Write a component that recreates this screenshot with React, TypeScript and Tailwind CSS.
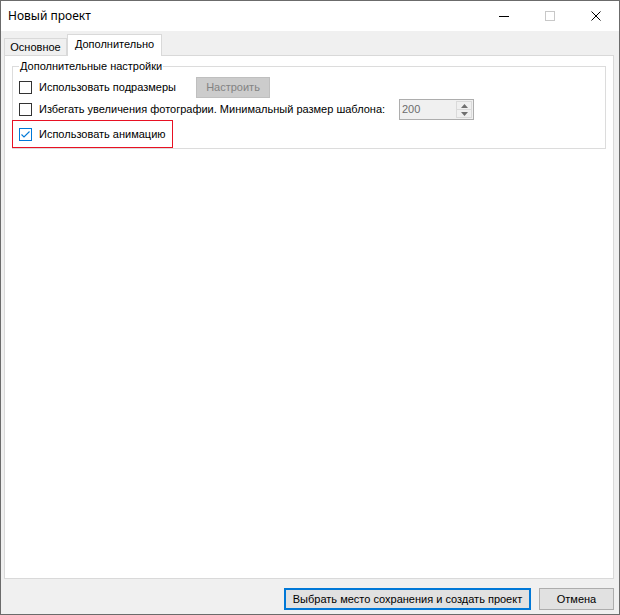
import React from "react";

const ui = "font-['Liberation_Sans',Arial,sans-serif] text-[11px] leading-[13px] text-black";

function CheckBox({ checked = false }: { checked?: boolean }) {
  return (
    <span
      className={`flex h-[13px] w-[13px] shrink-0 items-center justify-center border bg-white ${
        checked ? "border-[#0078d7]" : "border-[#333333]"
      }`}
    >
      {checked && (
        <svg width="11" height="11" viewBox="0 0 11 11" aria-hidden="true">
          <path d="M1.5 5.5 L4 8 L9.5 2.5" fill="none" stroke="#0078d7" strokeWidth="1.1" />
        </svg>
      )}
    </span>
  );
}

function SpinBox({ value }: { value: string }) {
  return (
    <div className="flex h-[21px] w-[75px] items-stretch border border-[#adadad] bg-[#f0f0f0]">
      <span className="flex-1 pl-[2px] pt-[3px] text-[#6d6d6d]">{value}</span>
      <div className="my-[1px] mr-[1px] flex w-[16px] flex-col">
        <span className="flex flex-1 items-center justify-center border border-[#dadada] bg-[#f0f0f0]">
          <svg width="7" height="4" viewBox="0 0 7 4" aria-hidden="true">
            <path d="M0 4 L3.5 0 L7 4 Z" fill="#707070" />
          </svg>
        </span>
        <span className="flex flex-1 items-center justify-center border border-t-0 border-[#dadada] bg-[#f0f0f0]">
          <svg width="7" height="4" viewBox="0 0 7 4" aria-hidden="true">
            <path d="M0 0 L3.5 4 L7 0 Z" fill="#707070" />
          </svg>
        </span>
      </div>
    </div>
  );
}

export default function App() {
  return (
    <div className={`flex h-[615px] w-[620px] flex-col border border-[#6b6b6b] bg-[#f0f0f0] ${ui}`}>
      {/* title bar */}
      <div className="flex h-[30px] shrink-0 items-center bg-white">
        <span className="ml-[7px] font-['Noto_Sans',sans-serif] text-[12px] leading-none">Новый проект</span>
        <div className="ml-auto flex h-full items-center">
          <span className="flex w-[46px] justify-center">
            <svg width="10" height="10" viewBox="0 0 10 10" aria-hidden="true">
              <path d="M0 5.5 H10" stroke="#000" strokeWidth="1" />
            </svg>
          </span>
          <span className="flex w-[46px] justify-center">
            <svg width="10" height="10" viewBox="0 0 10 10" aria-hidden="true">
              <rect x="0.5" y="0.5" width="9" height="9" fill="none" stroke="#c8c8c8" strokeWidth="1" />
            </svg>
          </span>
          <span className="flex w-[46px] justify-center">
            <svg width="10" height="10" viewBox="0 0 10 10" aria-hidden="true">
              <path d="M0.5 0.5 L9.5 9.5 M9.5 0.5 L0.5 9.5" stroke="#000" strokeWidth="1" />
            </svg>
          </span>
        </div>
      </div>

      {/* body */}
      <div className="flex flex-1 flex-col pl-[3px] pr-[5px] pt-[3px]">
        <div className="flex h-[21px] items-end">
          <div className="flex h-[17px] w-[63px] items-center justify-center border border-b-0 border-[#d9d9d9] bg-[#f0f0f0]">
            Основное
          </div>
          <div className="relative z-10 -mb-px flex h-[22px] w-[95px] items-center justify-center border border-b-0 border-[#d9d9d9] bg-white pb-[2px]">
            Дополнительно
          </div>
        </div>

        <div className="flex-1 border border-[#d9d9d9] bg-white px-[7px] pt-[4px]">
          <fieldset className="border border-[#dcdcdc] pl-[6px]">
            <legend className="px-[1px] leading-[13px]">Дополнительные настройки</legend>
            <div className="mt-[4px] flex h-[21px] items-center">
              <CheckBox />
              <span className="ml-[7px] w-[157px]">Использовать подразмеры</span>
              <span className="flex h-[21px] w-[74px] items-center justify-center border border-[#bfbfbf] bg-[#cccccc] text-[#838383]">
                Настроить
              </span>
            </div>
            <div className="mt-[1px] flex h-[21px] items-center">
              <CheckBox />
              <span className="ml-[7px] w-[360px]">Избегать увеличения фотографии. Минимальный размер шаблона:</span>
              <SpinBox value="200" />
            </div>
            <div className="-ml-[7px] flex h-[28px] w-[161px] items-center border border-[#e81123] pl-[6px]">
              <CheckBox checked />
              <span className="ml-[7px]">Использовать анимацию</span>
            </div>
          </fieldset>
        </div>

        <div className="mb-[4px] mt-[9px] flex h-[22px] justify-end gap-[8px]">
          <button className="w-[247px] border-2 border-[#0078d7] bg-[#e1e1e1]">
            Выбрать место сохранения и создать проект
          </button>
          <button className="w-[75px] border border-[#adadad] bg-[#e1e1e1]">Отмена</button>
        </div>
      </div>
    </div>
  );
}
